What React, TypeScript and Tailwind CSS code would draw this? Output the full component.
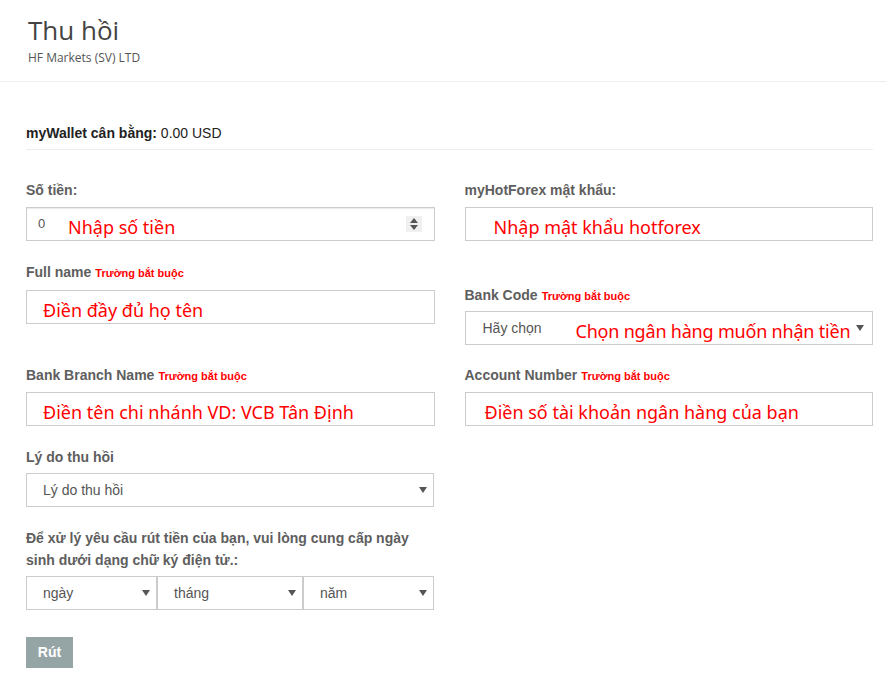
import React from "react";

const sans = "font-['Liberation_Sans',Arial,sans-serif]";
const note = "font-['Noto_Sans',sans-serif] text-[18px] text-[#ff0000] leading-none pt-[5px]";

function Arrow() {
  return (
    <svg width="8" height="6" viewBox="0 0 8 6" className="shrink-0">
      <polygon points="0,0 8,0 4,6" fill="#555" />
    </svg>
  );
}

function Label({ text, required }: { text: string; required?: boolean }) {
  return (
    <div className={`${sans} text-[14px] leading-[18px] font-bold text-[#5e5e5e]`}>
      {text}
      {required && (
        <span className="ml-[4px] text-[11px] text-[#ff0000]">Trường bắt buộc</span>
      )}
    </div>
  );
}

function Box({ children, className = "" }: { children?: React.ReactNode; className?: string }) {
  return (
    <div className={`h-[34px] border border-[#cccccc] bg-white flex items-center ${className}`}>
      {children}
    </div>
  );
}

function Select({ value, className = "" }: { value: string; className?: string }) {
  return (
    <Box className={`pl-[16px] pr-[6px] justify-between ${className}`}>
      <span className={`${sans} text-[14px] text-[#555]`}>{value}</span>
      <Arrow />
    </Box>
  );
}

export default function App() {
  return (
    <div className="w-[886px] h-[690px] bg-white overflow-hidden">
      <header className="h-[82px] border-b border-[#eeeeee] px-[28px] pt-[13px]">
        <h1 className="font-['Open_Sans',sans-serif] text-[26px] leading-[34px] text-[#444]">Thu hồi</h1>
        <div className="mt-[3px] font-['Open_Sans',sans-serif] text-[12px] leading-[16px] text-[#555]">
          HF Markets (SV) LTD
        </div>
      </header>

      <main className="pl-[26px] pr-[13px]">
        <div className={`mt-[42px] pb-[7px] border-b border-[#eeeeee] ${sans} text-[14px] leading-[18px] text-[#222]`}>
          <b>myWallet cân bằng:</b> 0.00 USD
        </div>

        <div className="mt-[31px] grid grid-cols-2 gap-x-[30px] items-start">
          <div>
            <Label text="Số tiền:" />
            <Box className="mt-[8px] border-[#c4c4c4] shadow-[inset_0_1px_1px_rgba(0,0,0,0.08)] pl-[11px] pr-[12px]">
              <span className={`${sans} text-[13px] text-[#555] w-[30px]`}>0</span>
              <span className={note}>Nhập số tiền</span>
              <span className="ml-auto w-[16px] h-[16px] bg-[#f0f0f0] flex flex-col items-center justify-center gap-[2px]">
                <svg width="8" height="5" viewBox="0 0 8 5"><polygon points="0,5 8,5 4,0" fill="#555" /></svg>
                <svg width="8" height="5" viewBox="0 0 8 5"><polygon points="0,0 8,0 4,5" fill="#555" /></svg>
              </span>
            </Box>
          </div>
          <div>
            <Label text="myHotForex mật khẩu:" />
            <Box className="mt-[8px] pl-[28px]">
              <span className={note}>Nhập mật khẩu hotforex</span>
            </Box>
          </div>

          <div className="mt-[22px]">
            <Label text="Full name" required />
            <Box className="mt-[8px] pl-[16px]">
              <span className={note}>Điền đầy đủ họ tên</span>
            </Box>
          </div>
          <div className="mt-[45px]">
            <Label text="Bank Code" required />
            <Box className="mt-[6px] pl-[17px] pr-[8px]">
              <span className={`${sans} text-[14px] text-[#555] w-[93px]`}>Hãy chọn</span>
              <span className={`${note} tracking-[-0.2px]`}>Chọn ngân hàng muốn nhận tiền</span>
              <span className="ml-auto"><Arrow /></span>
            </Box>
          </div>

          <div className="mt-[21px]">
            <Label text="Bank Branch Name" required />
            <Box className="mt-[7px] pl-[16px]">
              <span className={note}>Điền tên chi nhánh VD: VCB Tân Định</span>
            </Box>
          </div>
          <div className="mt-[21px]">
            <Label text="Account Number" required />
            <Box className="mt-[7px] pl-[19px]">
              <span className={note}>Điền số tài khoản ngân hàng của bạn</span>
            </Box>
          </div>
        </div>

        <div className="w-[408px]">
          <div className="mt-[22px]">
            <div className={`${sans} text-[14px] leading-[18px] font-bold text-[#5e5e5e]`}>Lý do thu hồi</div>
            <Select value="Lý do thu hồi" className="mt-[7px]" />
          </div>

          <p className={`mt-[20px] ${sans} text-[14px] leading-[22px] font-bold text-[#5e5e5e]`}>
            Để xử lý yêu cầu rút tiền của bạn, vui lòng cung cấp ngày sinh dưới dạng chữ ký điện tử.:
          </p>
          <div className="mt-[5px] flex">
            <Select value="ngày" className="w-[131px]" />
            <Select value="tháng" className="w-[146px]" />
            <Select value="năm" className="flex-1" />
          </div>

          <button className={`mt-[27px] h-[31px] w-[47px] bg-[#95a5a6] text-white ${sans} text-[14px] font-bold`}>
            Rút
          </button>
        </div>
      </main>
    </div>
  );
}
